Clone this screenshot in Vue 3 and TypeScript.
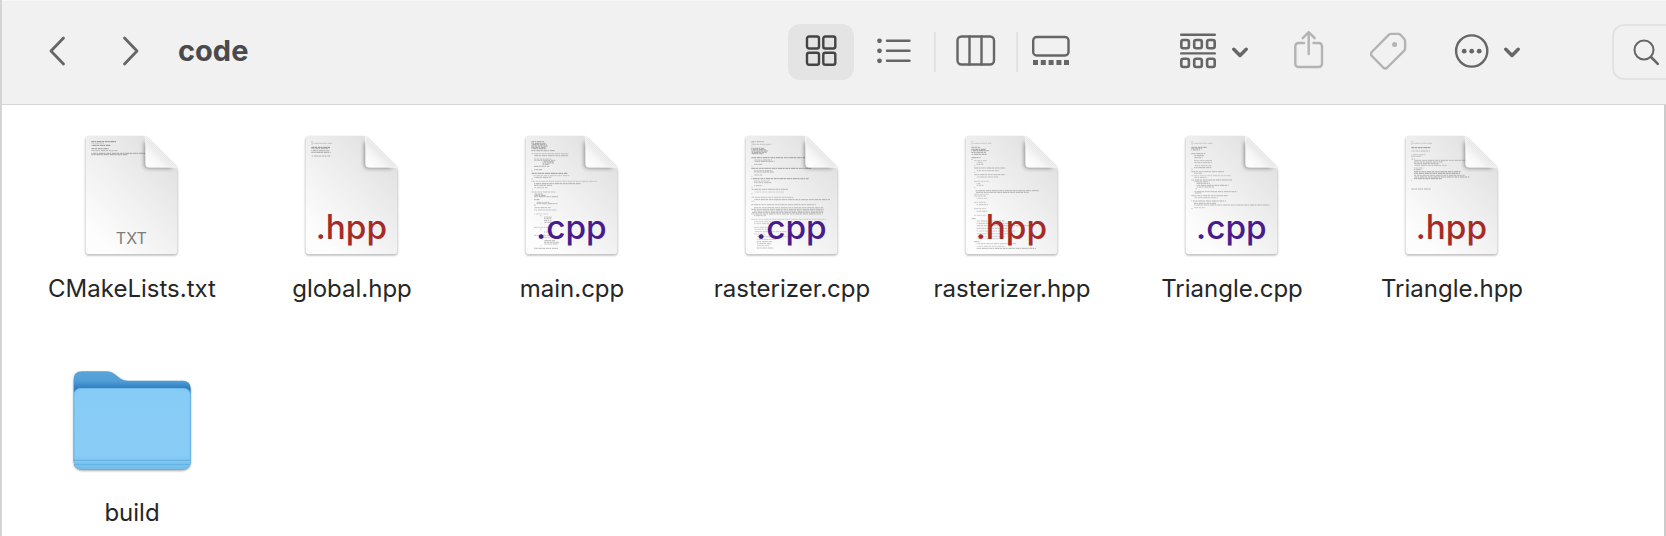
<script setup lang="ts">
interface Entry {
  name: string
  kind: 'txt' | 'hpp' | 'cpp' | 'folder'
  // Preview lines on the page: x, y, width, strength
  lines: number[][]
}

const badges: Record<string, string> = { txt: 'TXT', hpp: '.hpp', cpp: '.cpp' }

const entries: Entry[] = [
  {
    name: 'CMakeLists.txt',
    kind: 'txt',
    lines: [
      [70, 35, 74, 0.8], [70, 40, 38, 0.3], [70, 46, 58, 0.8], [70, 56, 52, 0.7], [70, 62, 78, 0.5],
      [70, 70, 162, 0.6], [70, 74, 108, 0.6],
    ],
  },
  {
    name: 'global.hpp',
    kind: 'hpp',
    lines: [
      [70, 35, 4, 0.5], [70, 40, 62, 0.35], [70, 44, 4, 0.5], [70, 52, 56, 0.8], [70, 56, 54, 0.5],
      [70, 62, 54, 0.5], [70, 67, 58, 0.6], [70, 78, 57, 0.5],
    ],
  },
  {
    name: 'main.cpp',
    kind: 'cpp',
    lines: [
      [70, 35, 38, 0.6], [70, 40, 44, 0.6], [70, 44, 46, 0.6], [70, 48, 50, 0.6], [70, 52, 44, 0.6], [70, 56, 46, 0.6],
      [70, 62, 71, 0.55], [70, 71, 112, 0.4], [78, 77, 102, 0.5], [78, 87, 52, 0.35], [78, 91, 64, 0.45],
      [104, 95, 34, 0.5], [104, 99, 36, 0.5], [104, 103, 18, 0.5], [78, 109, 46, 0.5], [78, 119, 25, 0.5], [70, 123, 4, 0.4],
      [70, 130, 108, 0.7], [74, 137, 110, 0.35], [78, 142, 52, 0.5], [70, 147, 4, 0.4], [70, 154, 196, 0.35],
      [78, 161, 140, 0.55], [78, 166, 54, 0.5], [78, 173, 42, 0.4], [70, 177, 4, 0.4], [70, 186, 72, 0.4],
      [78, 192, 28, 0.5], [78, 196, 36, 0.55], [78, 200, 72, 0.5], [78, 209, 16, 0.6], [86, 217, 40, 0.4],
      [86, 221, 62, 0.5], [78, 225, 5, 0.5], [78, 233, 50, 0.45], [78, 240, 68, 0.4], [78, 252, 44, 0.3], [96, 257, 4, 0.4],
      [108, 261, 24, 0.4], [108, 265, 24, 0.5], [108, 271, 22, 0.5], [108, 277, 24, 0.5], [96, 282, 4, 0.4], [78, 292, 42, 0.35],
      [96, 298, 4, 0.4], [108, 306, 24, 0.4], [78, 316, 58, 0.4], [96, 322, 30, 0.4], [108, 332, 34, 0.5],
      [108, 337, 44, 0.5], [108, 342, 42, 0.45], [96, 348, 5, 0.4], [78, 355, 72, 0.5],
    ],
  },
  {
    name: 'rasterizer.cpp',
    kind: 'cpp',
    lines: [
      [70, 35, 40, 0.45], [70, 39, 8, 0.3], [70, 43, 60, 0.35], [70, 48, 4, 0.3], [70, 55, 38, 0.6], [70, 59, 44, 0.6],
      [70, 63, 50, 0.6], [70, 67, 46, 0.6], [70, 71, 36, 0.6], [70, 83, 162, 0.65], [78, 90, 54, 0.4], [78, 94, 62, 0.5],
      [78, 103, 25, 0.5], [70, 108, 4, 0.3], [70, 115, 182, 0.65], [78, 122, 56, 0.4], [78, 126, 60, 0.5], [78, 135, 25, 0.45],
      [70, 139, 4, 0.3], [70, 146, 172, 0.65], [78, 153, 46, 0.4], [78, 158, 54, 0.45], [78, 167, 25, 0.45], [70, 171, 4, 0.3],
      [70, 178, 112, 0.5], [78, 186, 90, 0.3], [70, 191, 4, 0.3], [70, 202, 126, 0.4], [78, 209, 228, 0.5],
      [70, 214, 10, 0.3], [70, 224, 194, 0.45], [78, 233, 208, 0.4], [70, 238, 218, 0.5], [78, 243, 208, 0.4],
      [70, 247, 216, 0.5], [70, 252, 214, 0.5], [78, 257, 36, 0.4], [70, 268, 224, 0.3], [78, 275, 60, 0.35], [78, 281, 54, 0.35],
      [78, 292, 42, 0.35], [78, 298, 40, 0.35], [78, 305, 98, 0.35], [78, 312, 36, 0.3], [86, 320, 98, 0.35], [86, 328, 58, 0.4],
      [86, 335, 46, 0.45], [86, 341, 44, 0.45], [86, 347, 38, 0.35], [86, 354, 50, 0.45],
    ],
  },
  {
    name: 'rasterizer.hpp',
    kind: 'hpp',
    lines: [
      [70, 35, 4, 0.4], [70, 40, 60, 0.3], [70, 44, 4, 0.4], [70, 52, 26, 0.6], [70, 58, 44, 0.65], [70, 62, 52, 0.6],
      [70, 67, 44, 0.6], [70, 73, 46, 0.6], [70, 83, 28, 0.6], [70, 88, 4, 0.4], [78, 92, 38, 0.35], [86, 98, 20, 0.4],
      [86, 103, 20, 0.45], [78, 107, 4, 0.3], [78, 114, 94, 0.5], [86, 122, 68, 0.4], [78, 127, 4, 0.3], [78, 134, 94, 0.45],
      [86, 141, 66, 0.4], [78, 146, 4, 0.3], [78, 154, 44, 0.35], [86, 161, 12, 0.4], [86, 166, 20, 0.4], [78, 173, 4, 0.3],
      [82, 182, 192, 0.5], [82, 187, 160, 0.5], [78, 193, 44, 0.3], [78, 198, 36, 0.4], [86, 205, 32, 0.3],
      [78, 217, 38, 0.35], [86, 224, 34, 0.4], [78, 236, 36, 0.35], [86, 244, 34, 0.4], [78, 256, 34, 0.3],
      [70, 266, 14, 0.5], [86, 273, 84, 0.4], [86, 280, 132, 0.4], [86, 287, 156, 0.4], [86, 295, 108, 0.45],
      [86, 303, 116, 0.35], [86, 311, 94, 0.35], [86, 319, 86, 0.35], [86, 326, 76, 0.3], [78, 335, 16, 0.5],
      [86, 341, 118, 0.4], [86, 349, 86, 0.35], [86, 355, 178, 0.5],
    ],
  },
  {
    name: 'Triangle.cpp',
    kind: 'cpp',
    lines: [
      [70, 35, 4, 0.4], [70, 40, 64, 0.3], [70, 44, 4, 0.4], [70, 52, 46, 0.6], [70, 56, 32, 0.5], [70, 60, 26, 0.5],
      [70, 71, 42, 0.5], [78, 77, 30, 0.5], [78, 83, 26, 0.45], [78, 92, 54, 0.4], [78, 98, 54, 0.45], [78, 107, 52, 0.4],
      [78, 113, 54, 0.5], [70, 118, 4, 0.4], [70, 125, 98, 0.45], [78, 130, 24, 0.4], [70, 137, 118, 0.3], [78, 142, 38, 0.4],
      [70, 150, 122, 0.5], [78, 155, 46, 0.4], [86, 160, 40, 0.5], [86, 166, 96, 0.5], [86, 171, 52, 0.45], [82, 176, 4, 0.4],
      [78, 185, 130, 0.45], [78, 189, 22, 0.4], [70, 197, 110, 0.45], [78, 203, 72, 0.4], [70, 213, 104, 0.5],
      [78, 220, 66, 0.5], [78, 225, 226, 0.45], [78, 233, 34, 0.35], [70, 236, 4, 0.4],
    ],
  },
  {
    name: 'Triangle.hpp',
    kind: 'hpp',
    lines: [
      [70, 35, 4, 0.4], [70, 40, 62, 0.3], [70, 44, 4, 0.4], [70, 53, 58, 0.75], [70, 63, 56, 0.4], [70, 74, 42, 0.35],
      [70, 79, 30, 0.4], [70, 87, 10, 0.5], [78, 91, 162, 0.45], [78, 96, 86, 0.45], [78, 101, 74, 0.5], [78, 106, 100, 0.4],
      [78, 114, 28, 0.4], [78, 119, 22, 0.5], [78, 125, 142, 0.55], [78, 130, 138, 0.65], [78, 136, 152, 0.45],
      [78, 141, 166, 0.55], [78, 146, 84, 0.6], [70, 151, 4, 0.4], [70, 177, 60, 0.5],
    ],
  },
  { name: 'build', kind: 'folder', lines: [] },
]
</script>

<template>
  <div class="window">
    <header class="toolbar">
      <nav class="history" aria-label="History">
        <button type="button" aria-label="Back">
          <svg width="20" height="32" viewBox="0 0 20 32"><path d="M16.500 3 4 16 16.500 29" /></svg>
        </button>
        <button type="button" aria-label="Forward">
          <svg width="20" height="32" viewBox="0 0 20 32"><path d="M4.500 3 17 16 4.500 29" /></svg>
        </button>
      </nav>
      <h1>code</h1>

      <div class="views" role="group" aria-label="View">
        <button type="button" class="selected" aria-label="Icons" aria-pressed="true">
          <svg width="32" height="32" viewBox="0 0 32 32">
            <rect x="2" y="1.500" width="12" height="12" rx="2" />
            <rect x="18.300" y="1.500" width="12" height="12" rx="2" />
            <rect x="2" y="17.800" width="12" height="12" rx="2" />
            <rect x="18.300" y="17.800" width="12" height="12" rx="2" />
          </svg>
        </button>
        <button type="button" aria-label="List">
          <svg width="34" height="32" viewBox="0 0 34 32">
            <path d="M10 5.800h22.500M10 15.800h22.500M10 25.800h22.500" />
            <g class="solid"><circle cx="2.500" cy="5.800" r="2.400" /><circle cx="2.500" cy="15.800" r="2.400" /><circle cx="2.500" cy="25.800" r="2.400" /></g>
          </svg>
        </button>
        <i class="divider"></i>
        <button type="button" aria-label="Columns">
          <svg width="40" height="32" viewBox="0 0 40 32">
            <rect x="1.500" y="1.500" width="36.500" height="28" rx="4" />
            <path d="M13.500 1.500v28M25.500 1.500v28" />
          </svg>
        </button>
        <i class="divider"></i>
        <button type="button" class="narrow" aria-label="Gallery">
          <svg width="38" height="32" viewBox="0 0 38 32">
            <rect x="1.200" y="2" width="35.300" height="18.500" rx="3.500" />
            <path class="solid" d="M1 25h5v5H1zM8.800 25h5v5h-5zM16.600 25h5v5h-5zM24.400 25h5v5h-5zM32 25h5v5h-5z" />
          </svg>
        </button>
      </div>

      <div class="actions">
        <button type="button" aria-label="Group items">
          <svg width="68" height="40" viewBox="0 0 68 40">
            <path d="M1.200 4.700h33.600M1.200 23.400h33.600" />
            <g class="medium">
              <rect x="1.300" y="10" width="7.600" height="8.200" rx="2" /><rect x="14.200" y="10" width="7.600" height="8.200" rx="2" /><rect x="27.100" y="10" width="7.600" height="8.200" rx="2" />
              <rect x="1.300" y="28.800" width="7.600" height="8.200" rx="2" /><rect x="14.200" y="28.800" width="7.600" height="8.200" rx="2" /><rect x="27.100" y="28.800" width="7.600" height="8.200" rx="2" />
            </g>
            <path class="heavy" d="M53.800 19.200l6.200 6.300 6.200-6.300" />
          </svg>
        </button>
        <button type="button" class="dim" aria-label="Share" disabled>
          <svg width="30" height="40" viewBox="0 0 30 40">
            <path d="M10 13H4.500A3.200 3.200 0 0 0 1.300 16.200V33.800A3.200 3.200 0 0 0 4.500 37H24.800A3.200 3.200 0 0 0 28 33.800V16.200A3.200 3.200 0 0 0 24.800 13H19.500" />
            <path d="M14.700 24V2.500M8.700 8.200l6-6 6 6" />
          </svg>
        </button>
        <button type="button" class="dim" aria-label="Tags" disabled>
          <svg width="38" height="40" viewBox="0 0 38 40">
            <path d="M19 4.600Q19.900 3.900 21 3.900H28.300Q29.600 3.900 30.500 4.800L34.300 9Q35.100 9.900 35.100 11.200V18.500Q35.100 19.700 34.200 20.600L17.300 37.500Q15.200 39.300 13.200 37.500L1.700 25.900Q.2 24 1.700 22Z" />
            <circle class="solid" cx="24.600" cy="14.400" r="2.500" />
          </svg>
        </button>
        <button type="button" aria-label="More actions">
          <svg width="66" height="40" viewBox="0 0 66 40">
            <circle cx="17.700" cy="21" r="15.600" />
            <g class="solid"><circle cx="10.200" cy="21.200" r="2.400" /><circle cx="17.700" cy="21.200" r="2.400" /><circle cx="25.200" cy="21.200" r="2.400" /></g>
            <path class="heavy" d="M51.800 19.200l6.200 6.300 6.200-6.300" />
          </svg>
        </button>
        <button type="button" class="search" aria-label="Search">
          <svg width="28" height="28" viewBox="0 0 28 28">
            <circle cx="12" cy="12" r="9.500" /><path class="medium" d="M19 19l6.800 6.800" />
          </svg>
        </button>
      </div>
    </header>

    <main>
      <ul class="files">
        <li v-for="entry in entries" :key="entry.name">
          <button type="button" class="entry">
            <svg v-if="entry.kind === 'folder'" class="icon" viewBox="0 0 384 384" aria-hidden="true">
              <defs>
                <linearGradient id="folder-back" x2="0" y2="1">
                  <stop offset="0" stop-color="#5ba5d8" /><stop offset=".1" stop-color="#509ed5" /><stop offset=".17" stop-color="#2f7fc4" />
                </linearGradient>
                <linearGradient id="folder-front" x2="0" y2="1">
                  <stop offset="0" stop-color="#82c9f5" /><stop offset=".05" stop-color="#87ccf6" />
                  <stop offset=".82" stop-color="#89cdf7" /><stop offset="1" stop-color="#72bce9" />
                </linearGradient>
              </defs>
              <path class="cast" fill="url(#folder-back)" d="M17 77Q17 52 42 52H118Q130 52 140 60L155 72Q165 80 180 80H343Q368 80 368 104V322Q368 347 343 347H42Q17 347 17 322Z" />
              <path fill="url(#folder-front)" d="M17 126Q17 102 41 102H344Q368 102 368 126V322Q368 347 343 347H42Q17 347 17 322Z" />
              <path class="rim" d="M18.500 322V126Q18.500 103.500 41 103.500H344Q366.500 103.500 366.500 126V322" />
              <path class="groove" d="M18 319H367M19 331H366" />
            </svg>
            <svg v-else class="icon" viewBox="0 0 384 384" aria-hidden="true">
              <defs>
                <linearGradient id="sheet" x1="1" y1=".15" x2=".3" y2="1">
                  <stop offset="0" stop-color="#dfdfdf" /><stop offset=".5" stop-color="#efefef" /><stop offset="1" stop-color="#fdfdfd" />
                </linearGradient>
                <linearGradient id="fold" x1="0" y1="1" x2=".55" y2=".45">
                  <stop offset="0" stop-color="#fff" /><stop offset=".5" stop-color="#f8f8f8" /><stop offset="1" stop-color="#e4e4e4" />
                </linearGradient>
                <clipPath id="page"><path d="M64 18H236L328 110V362Q328 373 317 373H64Q53 373 53 362V29Q53 18 64 18Z" /></clipPath>
              </defs>
              <path class="cast" fill="url(#sheet)" d="M64 18H226Q234 18 240 24L322 106Q328 112 328 120V362Q328 373 317 373H64Q53 373 53 362V29Q53 18 64 18Z" />
              <g clip-path="url(#page)">
                <path
                  v-for="(line, i) in entry.lines"
                  :key="i"
                  class="print"
                  :d="`M${line[0]} ${line[1]}h${line[2]}`"
                  :opacity="line[3]"
                  :stroke-dashoffset="i * 7"
                />
                <path class="shade" d="M230 32V104Q230 114 240 114H316Z" />
              </g>
              <path class="fold" fill="url(#fold)" d="M233 20V102Q233 112 243 112H326Z" />
              <text :class="['badge', entry.kind]" x="190" :y="entry.kind === 'txt' ? 343 : 328">{{ badges[entry.kind] }}</text>
            </svg>
            <span class="label">{{ entry.name }}</span>
          </button>
        </li>
      </ul>
    </main>
  </div>
</template>

<style>
body {
  margin: 0;
}
</style>

<style scoped>
.window {
  box-sizing: border-box;
  min-height: 100vh;
  display: flex;
  flex-direction: column;
  border-left: 2px solid #d4d4d4;
  background: #fff;
  font-family: Inter, "Liberation Sans", sans-serif;
  overflow: hidden;
}
button {
  display: flex;
  align-items: center;
  justify-content: center;
  padding: 0;
  border: 0;
  background: none;
  color: #666;
  font: inherit;
}
.toolbar {
  display: flex;
  align-items: center;
  box-sizing: border-box;
  height: 105px;
  padding-bottom: 1px;
  border-top: 1px solid #f8f8f8;
  border-bottom: 1px solid #d6d6d6;
  background: #f1f1f1;
}
.toolbar svg {
  display: block;
  fill: none;
  stroke: currentColor;
  stroke-width: 2.4;
  stroke-linecap: round;
  stroke-linejoin: round;
}
.toolbar .solid {
  fill: currentColor;
  stroke: none;
}
.toolbar .medium {
  stroke-width: 2.6;
}
.toolbar .heavy {
  stroke-width: 3.4;
}
.history {
  display: flex;
  gap: 53px;
  padding: 0 0 2px 45px;
}
.history svg {
  stroke-width: 2.8;
}
h1 {
  margin: 0 auto 0 38px;
  padding-bottom: 2px;
  color: #4a4a4a;
  font-size: 29px;
  line-height: 36px;
  font-weight: 700;
}
.views {
  display: flex;
  align-items: center;
  gap: 7px;
  margin-right: 103px;
}
.views button {
  box-sizing: border-box;
  width: 66px;
  height: 56px;
  padding-bottom: 2px;
  border-radius: 12px;
}
.views .narrow {
  width: 52px;
}
.views .selected {
  background: #e4e4e4;
  color: #444;
}
.divider {
  width: 2px;
  height: 40px;
  background: #e2e2e2;
}
.actions {
  display: flex;
  align-items: center;
  gap: 46px;
}
.actions button {
  padding-bottom: 4px;
}
.actions .dim {
  color: #b3b3b3;
}
.actions .search {
  box-sizing: border-box;
  width: 54px;
  height: 56px;
  margin-left: 46px;
  padding: 0 0 0 12px;
  border: 2px solid #e3e3e3;
  border-right: 0;
  border-radius: 12px 0 0 12px;
}
.search svg {
  stroke-width: 2;
}
main {
  flex: 1;
  padding: 25px 18px 0 20px;
  border-right: 2px solid #cbcbcb;
}
.files {
  display: grid;
  grid-template-columns: repeat(auto-fill, 220px);
  row-gap: 49px;
  margin: 0;
  padding: 0;
  list-style: none;
}
.entry {
  flex-direction: column;
  gap: 15px;
  width: 100%;
}
.icon {
  display: block;
  width: 128px;
  height: 128px;
}
.cast {
  filter: drop-shadow(0 3px 3px rgb(0 0 0 / 38%));
}
.print {
  stroke: #777;
  stroke-width: 3;
  stroke-dasharray: 9 1 5 2 13 1 7 2;
}
.shade {
  fill: #444;
  opacity: 0.65;
  filter: blur(7px);
}
.fold {
  stroke: #fff;
  stroke-width: 2;
  stroke-linejoin: round;
}
.badge {
  text-anchor: middle;
  font-size: 100px;
  font-weight: 500;
}
.badge.txt {
  fill: #7d7d7d;
  font-size: 48px;
  font-weight: 400;
}
.badge.hpp {
  fill: #a52c26;
}
.badge.cpp {
  fill: #481c8c;
}
.rim {
  fill: none;
  stroke: #64b2e5;
  stroke-width: 3;
  opacity: 0.6;
}
.groove {
  stroke: #62b0e2;
  stroke-width: 3;
}
.label {
  color: #262626;
  font-size: 24px;
  line-height: 32px;
}
</style>
